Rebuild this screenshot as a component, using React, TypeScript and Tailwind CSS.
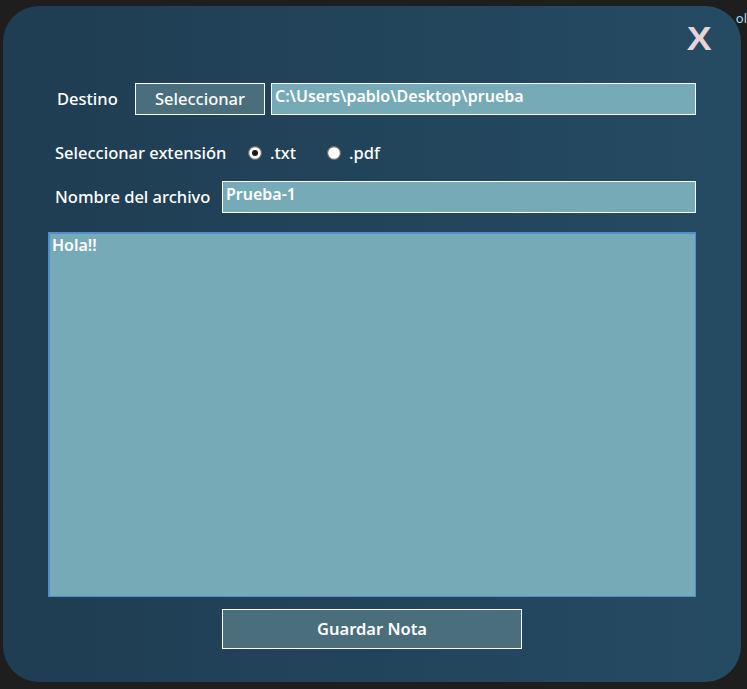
import React from "react";

function Radio({ checked }: { checked: boolean }) {
  return (
    <svg width="14" height="14" viewBox="0 0 14 14" className="shrink-0">
      <circle cx="7" cy="7" r="6.4" fill="#ffffff" stroke="#6b6b6b" strokeWidth="1.1" />
      {checked && <circle cx="7" cy="7" r="3" fill="#1a1a1a" />}
    </svg>
  );
}

export default function App() {
  const font = { fontFamily: '"Noto Sans", "Open Sans", sans-serif' };
  return (
    <div className="w-[747px] h-[689px] bg-[#1e1e1e] pt-[6px] pl-[3px] overflow-hidden relative" style={font}>
      <div className="absolute right-0 top-[12px] text-[13px] text-[#9cdcfe] leading-none">ol</div>
      <div className="relative w-[738px] h-[676px] rounded-[36px] bg-gradient-to-r from-[#1f3d53] to-[#254b63] flex flex-col px-[45px]">
        <div className="h-[77px] flex justify-end pt-[15px] -mr-[15px]">
          <span
            className="text-[34px] font-bold leading-none text-[#e6d4d7] scale-x-110"
            style={{ fontFamily: '"Liberation Sans", Arial, sans-serif' }}
          >
            X
          </span>
        </div>

        <div className="flex h-[32px] items-stretch">
          <div className="w-[87px] pl-[9px] flex items-center text-white text-[16.5px] font-medium">Destino</div>
          <button className="w-[130px] bg-[#4a6e7c] border border-white text-white text-[16.5px] font-medium flex items-center justify-center">
            Seleccionar
          </button>
          <div className="ml-[6px] flex-1 bg-[#77aab7] border border-white text-white text-[16px] font-semibold px-[3px] leading-[24px]">
            C:\Users\pablo\Desktop\prueba
          </div>
        </div>

        <div className="flex h-[24px] items-center mt-[26px]">
          <div className="w-[200px] pl-[7px] text-white text-[16.5px] font-medium">Seleccionar extensión</div>
          <div className="flex items-center gap-[8px]">
            <Radio checked />
            <span className="text-white text-[16.5px] font-medium">.txt</span>
          </div>
          <div className="flex items-center gap-[8px] ml-[31px]">
            <Radio checked={false} />
            <span className="text-white text-[16.5px] font-medium">.pdf</span>
          </div>
        </div>

        <div className="flex h-[32px] items-stretch mt-[16px]">
          <div className="w-[174px] pl-[7px] flex items-center text-white text-[16.5px] font-medium">Nombre del archivo</div>
          <div className="flex-1 bg-[#77aab7] border border-white text-white text-[16px] font-semibold px-[3px] leading-[24px]">
            Prueba-1
          </div>
        </div>

        <div className="mt-[19px] h-[365px] bg-[#77aab7] border-2 border-[#4f8fd0] border-r border-b text-white text-[16px] font-semibold px-[2px] leading-[22px]">
          Hola!!
        </div>

        <div className="flex justify-center mt-[12px]">
          <button className="w-[300px] h-[40px] bg-[#4a6e7c] border border-white text-white text-[16.5px] font-semibold">
            Guardar Nota
          </button>
        </div>
      </div>
    </div>
  );
}
